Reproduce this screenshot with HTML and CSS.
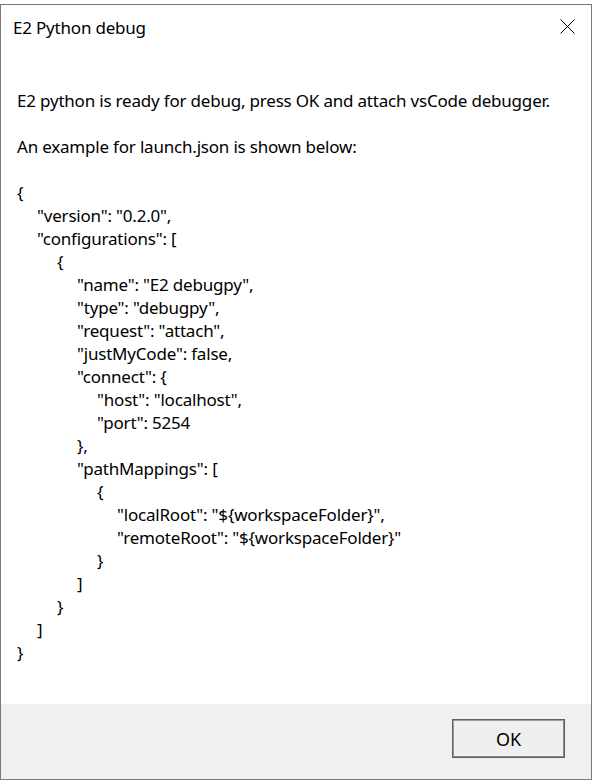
FILE: index.html
```
<!DOCTYPE html>
<html lang="en">
<head>
    <meta charset="UTF-8">
    <meta name="viewport" content="width=device-width, initial-scale=1.0">
    <title>E2 Python debug</title>
    <link rel="stylesheet" href="styles.css">
</head>
<body>

<div class="dialog">
    <!-- Title bar -->
    <div class="title-bar">
        <span class="title">E2 Python debug</span>
        <button class="close-btn" aria-label="Close">
            <svg width="15" height="15" viewBox="0 0 15 15">
                <path d="M0.5 0.5 L14.5 14.5 M14.5 0.5 L0.5 14.5" stroke="#000" stroke-width="1" fill="none"/>
            </svg>
        </button>
    </div>

    <!-- Message -->
    <div class="message">
        <p>E2 python is ready for debug, press OK and attach vsCode debugger.</p>
        <p>An example for launch.json is shown below:</p>

        <div class="code">
            <div class="l0">{</div>
            <div class="l1">"version": "0.2.0",</div>
            <div class="l1">"configurations": [</div>
            <div class="l2">{</div>
            <div class="l3">"name": "E2 debugpy",</div>
            <div class="l3">"type": "debugpy",</div>
            <div class="l3">"request": "attach",</div>
            <div class="l3">"justMyCode": false,</div>
            <div class="l3">"connect": {</div>
            <div class="l4">"host": "localhost",</div>
            <div class="l4">"port": 5254</div>
            <div class="l3">},</div>
            <div class="l3">"pathMappings": [</div>
            <div class="l4">{</div>
            <div class="l5">"localRoot": "${workspaceFolder}",</div>
            <div class="l5">"remoteRoot": "${workspaceFolder}"</div>
            <div class="l4">}</div>
            <div class="l3">]</div>
            <div class="l2">}</div>
            <div class="l1">]</div>
            <div class="l0">}</div>
        </div>
    </div>

    <!-- Buttons -->
    <div class="footer">
        <button class="ok-btn">OK</button>
    </div>
</div>

</body>
</html>
```

FILE: styles.css
```
body {
    margin: 0;
    padding: 0;
    background-color: #FFFFFF;
    font-family: 'Noto Sans', 'Open Sans', sans-serif;
    font-size: 17px;
    letter-spacing: -0.2px;
    line-height: 23px;
    color: #000000;
}

.dialog {
    margin-top: 4px;
    width: 592px;
    height: 776px;
    box-sizing: border-box;
    border: 1px solid #7a7a7a;
    background-color: #FFFFFF;
    display: flex;
    flex-direction: column;
}

.title-bar {
    height: 44px;
    display: flex;
    align-items: center;
    justify-content: space-between;
    padding-left: 12px;
    padding-right: 16px;
}

.close-btn {
    background: none;
    border: none;
    padding: 0;
    width: 15px;
    height: 15px;
    display: flex;
    margin-top: -2px;
}

.message {
    flex: 1;
    padding: 40px 16px 0 16px;
}

.message p {
    margin: 0 0 23px 0;
}

.l1 { padding-left: 20px; }
.l2 { padding-left: 40px; }
.l3 { padding-left: 60px; }
.l4 { padding-left: 80px; }
.l5 { padding-left: 100px; }

.footer {
    height: 75px;
    background-color: #F0F0F0;
    display: flex;
    justify-content: flex-end;
    align-items: flex-start;
    padding-top: 15px;
    padding-right: 26px;
    box-sizing: border-box;
}

.ok-btn {
    width: 113px;
    height: 39px;
    background-color: #EFEFEF;
    border: 1px solid #5f5f5f;
    box-shadow: inset 1px 1px 0 #9a9a9a, inset -1px -1px 0 #8a8a8a;
    font-family: inherit;
    font-size: 18px;
    color: #000000;
    padding: 0;
}
```
